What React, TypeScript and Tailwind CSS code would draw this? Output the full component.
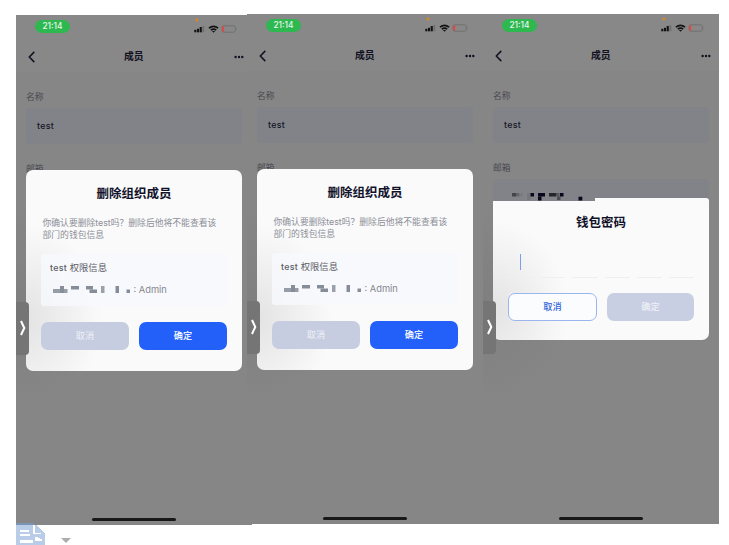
import type { ReactNode } from "react";

type Rect = [x: number, y: number, w: number, h: number, fill: string];

const roleMosaic: Rect[] = [
  [0, 5, 7, 4, "#969da6"], [7, 2, 4, 7, "#858d98"], [11, 5, 3.5, 4, "#969da6"],
  [18, 2, 8, 3.5, "#858d98"], [33, 2, 7, 3.5, "#858d98"], [36.5, 5.5, 7.5, 3.5, "#858d98"],
  [48, 2, 3.5, 7, "#9ba1ab"], [62.5, 2, 3.5, 7, "#858d98"], [73.5, 5.5, 3.5, 3.5, "#858d98"],
];

const mailMosaic: Rect[] = [
  [0, 0, 4, 3.5, "#44454a"], [4, 0, 3.5, 3.5, "#63646a"], [7.5, 0, 3.5, 3.5, "#7a7b80"],
  [15, 0, 3.5, 7, "#77787d"], [18.5, 0, 3.5, 3.5, "#08081c"], [26, 0, 7, 3.5, "#08081c"],
  [26, 3.5, 3.5, 4, "#08081c"], [37, 0, 7, 3.5, "#25252e"], [44, 0, 3.5, 3.5, "#55565b"],
  [45, 3.5, 3.5, 3.5, "#4b4c51"], [48, 0, 3.5, 3.5, "#08081c"], [66.5, 3.7, 3.8, 3.8, "#08081c"],
];

function Mosaic({ rects, className }: { rects: Rect[]; className: string }) {
  return (
    <svg className={className} width="80" height="9" viewBox="0 0 80 9">
      {rects.map(([x, y, w, h, fill], i) => (
        <rect key={i} x={x} y={y} width={w} height={h} fill={fill} />
      ))}
    </svg>
  );
}

function StatusBar() {
  return (
    <div className="flex h-[26px] items-start justify-between pl-[19px] pr-[15px]">
      <div className="mt-[5px] flex h-[13px] w-[35px] items-center justify-center rounded-full bg-[#2db850] text-[8.4px] font-medium leading-none text-[#e9f7ec]">
        21:14
      </div>
      <svg className="mt-[3px]" width="43" height="17" viewBox="0 0 43 17">
        <circle cx="2.8" cy="2" r="1.4" fill="#d98a1c" />
        <g fill="#121212">
          <rect x="0.3" y="11.8" width="2.1" height="2.5" />
          <rect x="3" y="10.8" width="2.1" height="3.5" />
          <rect x="5.7" y="9" width="2.1" height="5.3" />
        </g>
        <rect x="8.4" y="8" width="1.8" height="6.3" fill="#707070" />
        <g fill="none" stroke="#121212" strokeWidth="1.6">
          <path d="M14.9 10.2q4.6-3.8 9.2 0" />
          <path d="M16.8 12.2q2.7-2.3 5.4 0" />
        </g>
        <path d="M17.9 13.1h3.2l-1.6 1.6z" fill="#121212" />
        <rect x="28" y="7.8" width="13.3" height="6.4" rx="1.8" fill="none" stroke="#6b6b6b" strokeWidth=".8" />
        <rect x="28.3" y="8.3" width="1.8" height="5.4" rx=".6" fill="#e84440" />
        <path d="M42.2 10q1 1.1 0 2.2z" fill="#6b6b6b" />
      </svg>
    </div>
  );
}

function Header() {
  return (
    <div className="flex h-[31px] items-center justify-between bg-[#888888] pl-[12px] pr-[8.5px]">
      <svg width="8" height="12" viewBox="0 0 8 12" fill="none" stroke="#111122" strokeWidth="1.5">
        <path d="M6.3.9 1.3 6l5 5.1" />
      </svg>
      <span className="mr-[2px] pt-[2px] text-[9.8px] font-bold text-[#11111f]">成员</span>
      <svg width="10" height="4" viewBox="0 0 10 4" fill="#111122">
        <circle cx="1.6" cy="2" r="1.2" />
        <circle cx="5" cy="2" r="1.2" />
        <circle cx="8.3" cy="2" r="1.2" />
      </svg>
    </div>
  );
}

function Screen({ children, className = "", mail = false }: { children: ReactNode; className?: string; mail?: boolean }) {
  return (
    <section className={`relative h-[510px] w-[236px] shrink-0 overflow-hidden bg-[#868686] ${className}`}>
      <div className="bg-[#888888]">
        <StatusBar />
        <Header />
      </div>
      <div className="px-[10px] pt-[18px] text-[8.8px] leading-[14px] text-[#49494f]">
        <div>名称</div>
        <div className="mt-[4px] flex h-[36px] items-center rounded-[4px] bg-[#828388] pl-[11px] text-[8.9px] font-medium tracking-[0.3px] text-[#151525]">
          test
        </div>
        <div className="mt-[18px]">邮箱</div>
        {mail && (
          <div className="mt-[4px] h-[36px] rounded-[4px] bg-[#828388] pl-[19px] pt-[14px]">
            <Mosaic rects={mailMosaic} className="block" />
          </div>
        )}
      </div>
      <div className="absolute left-0 top-[190px] h-[200px] w-[90px] bg-[radial-gradient(ellipse_at_left,#7878787f,transparent_70%)]" />
      {children}
      <div className="absolute left-0 top-[287px] flex h-[53px] w-[13px] items-center justify-center rounded-r-[4px] bg-[#757576]">
        <svg className="-mt-px ml-px" width="6" height="16" viewBox="0 0 6 16" fill="none" stroke="#ffffff" strokeWidth="2">
          <path d="M1 1q1 2.2 3.3 7Q2 12.8 1 15" />
        </svg>
      </div>
      <div className="absolute bottom-[4.5px] left-[76px] h-[2.5px] w-[84px] rounded-full bg-[#181818]" />
    </section>
  );
}

function DeleteDialog() {
  return (
    <div className="absolute left-[10px] top-[155px] h-[201px] w-[216px] rounded-[7px] bg-[#fafafa] bg-[radial-gradient(ellipse_75px_95px_at_0_150px,#e3e3e4,transparent)] px-[15px] pt-[15px]">
      <h2 className="text-center text-[12.5px] font-bold leading-[18px] text-[#11112a]">删除组织成员</h2>
      <p className="mt-[14px] whitespace-nowrap pl-[1.5px] text-[8.8px] leading-[12px] text-[#8c8e98]">
        你确认要删除test吗？删除后他将不能查看该
        <br />
        部门的钱包信息
      </p>
      <div className="mt-[13px] h-[52px] rounded-[3px] bg-[#f8f9fd]/80 pl-[9px] pt-[7px]">
        <div className="text-[9.3px] leading-[14px] text-[#5b5c65]">
          <span className="text-[8.9px] font-medium tracking-[0.3px]">test</span> 权限信息
        </div>
        <div className="mt-[8px] flex h-[14px] items-center text-[9.3px] text-[#85868f]">
          <Mosaic rects={roleMosaic} className="-mt-[3px] ml-[3px] shrink-0" />
          <span className="ml-[0.5px] whitespace-nowrap">: Admin</span>
        </div>
      </div>
      <div className="mt-[16px] flex gap-[10px] text-[9.2px]">
        <button className="h-[28px] flex-1 rounded-[7px] bg-[#c7cde0] text-[#eef0f8]">取消</button>
        <button className="h-[28px] flex-1 rounded-[7px] bg-[#2360fa] font-medium text-white">确定</button>
      </div>
    </div>
  );
}

function PasswordDialog() {
  return (
    <div className="absolute left-[10px] top-[184px] h-[142px] w-[216px]">
      <div className="ml-[102px] h-[3px] rounded-tr-[7px] bg-[#fafafa]" />
      <div className="h-[138.5px] rounded-b-[7px] bg-[#fafafa] bg-[radial-gradient(ellipse_75px_90px_at_0_110px,#e3e3e4,transparent)] px-[15px] pt-[13px]">
        <h2 className="text-center text-[12.5px] font-bold leading-[18px] text-[#11112a]">钱包密码</h2>
        <div className="ml-[12px] mt-[22px] h-[16px] w-px bg-[#7d9df0]" />
        <div className="mt-[7px] flex gap-[7px]">
          {[0, 1, 2, 3, 4, 5].map((n) => (
            <div key={n} className="h-px flex-1 bg-[#efeff0]" />
          ))}
        </div>
        <div className="mt-[15px] flex gap-[10px] text-[9.2px] font-medium">
          <button className="h-[28px] flex-1 rounded-[7px] border border-[#9bb5ee] bg-[#fbfcfe] text-[#3265d8]">取消</button>
          <button className="h-[28px] flex-1 rounded-[7px] bg-[#c9cfe3] text-[#eef0f8]">确定</button>
        </div>
      </div>
    </div>
  );
}

export default function App() {
  return (
    <main className="relative h-[545px] w-[729px] overflow-hidden bg-white pl-[16px] pt-[14px] font-[Inter,'Noto_Sans_CJK_SC',sans-serif]">
      <div className="flex items-start">
        <Screen className="mt-px">
          <DeleteDialog />
        </Screen>
        <Screen className="-ml-[5px]">
          <DeleteDialog />
        </Screen>
        <Screen mail>
          <PasswordDialog />
        </Screen>
      </div>
      <div className="relative -mt-[2px] flex items-start">
        <svg width="29" height="22" viewBox="0 0 29 22" shapeRendering="crispEdges">
          <path d="M0 0h18v2h2l9 9v11H0z" fill="#b9cde9" />
          <path d="M0 0h18v2H0z" fill="#7c93b6" />
          <path d="M17 2h1.5v2l7 7H17z" fill="#ffffff" />
          <path d="M18.5 3l8 7h-8z" fill="#b9cde9" />
          <g fill="#ffffff">
            <path d="M4 7h9v2H4zM4 11h10v2H4zM4 17h13v3H4z" />
            <path d="M19 14h3v1h2v1h2v2h-7z" />
          </g>
        </svg>
        <svg className="ml-[16px] mt-[15px]" width="10" height="5" viewBox="0 0 10 5">
          <path d="M0 0h10L5 5z" fill="#adadad" />
        </svg>
      </div>
    </main>
  );
}
